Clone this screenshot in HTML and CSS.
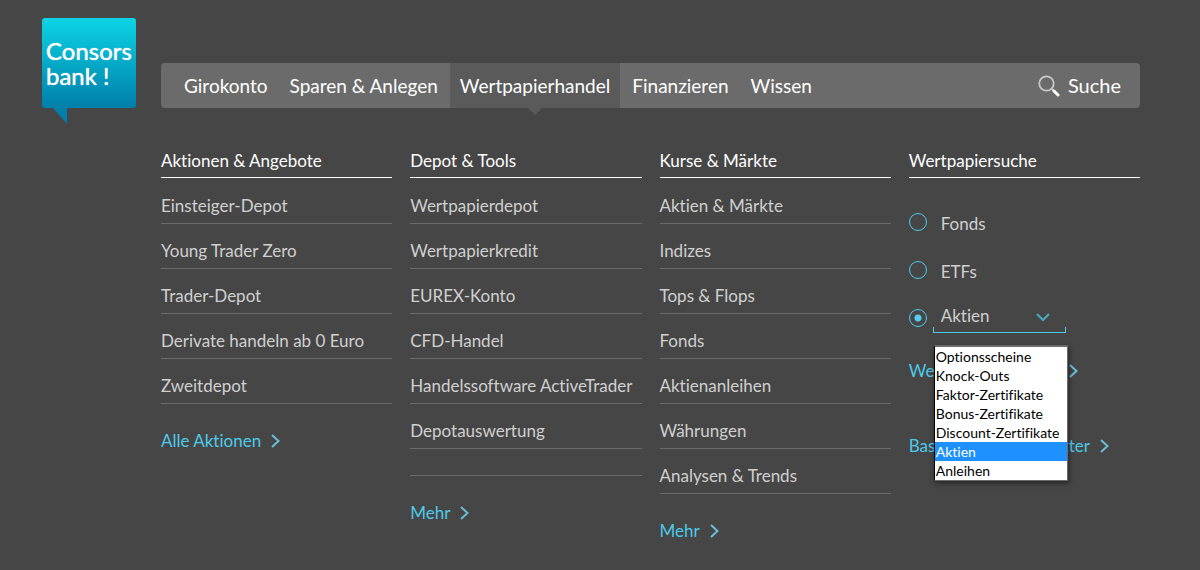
FILE: index.html
```html
<!DOCTYPE html>
<html lang="de">
<head>
<meta charset="utf-8">
<title>Consorsbank – Wertpapierhandel</title>
<link rel="stylesheet" href="styles.css">
</head>
<body>
<header class="header">
  <a class="logo" href="#" aria-label="Consorsbank Startseite">
    <span class="logo-text">Consors<br>bank !</span>
    <svg class="logo-tail" viewBox="0 0 16 16" aria-hidden="true"><path d="M0 0H14V16Z"/></svg>
  </a>
  <nav class="nav">
    <a class="nav-link" href="#">Girokonto</a>
    <a class="nav-link" href="#">Sparen &amp; Anlegen</a>
    <a class="nav-link active" href="#">Wertpapierhandel</a>
    <a class="nav-link" href="#">Finanzieren</a>
    <a class="nav-link" href="#">Wissen</a>
    <a class="nav-search" href="#">
      <svg class="search-icon" viewBox="0 0 22 22" aria-hidden="true"><circle cx="8.500" cy="8.500" r="7.200"/><path d="M14 14L16 16"/><path class="handle" d="M16 16L20 20"/></svg>
      Suche
    </a>
  </nav>
</header>
<main class="menu">
  <section class="column">
    <h2 class="title">Aktionen &amp; Angebote</h2>
    <ul class="links">
      <li><a href="#">Einsteiger-Depot</a></li>
      <li><a href="#">Young Trader Zero</a></li>
      <li><a href="#">Trader-Depot</a></li>
      <li><a href="#">Derivate handeln ab 0 Euro</a></li>
      <li><a href="#">Zweitdepot</a></li>
    </ul>
    <a class="more" href="#">Alle Aktionen<svg viewBox="0 0 9 14" aria-hidden="true"><path d="M1 1L7.500 7L1 13"/></svg></a>
  </section>
  <section class="column">
    <h2 class="title">Depot &amp; Tools</h2>
    <ul class="links">
      <li><a href="#">Wertpapierdepot</a></li>
      <li><a href="#">Wertpapierkredit</a></li>
      <li><a href="#">EUREX-Konto</a></li>
      <li><a href="#">CFD-Handel</a></li>
      <li><a href="#">Handelssoftware ActiveTrader</a></li>
      <li><a href="#">Depotauswertung</a></li>
      <li class="empty"></li>
    </ul>
    <a class="more" href="#">Mehr<svg viewBox="0 0 9 14" aria-hidden="true"><path d="M1 1L7.500 7L1 13"/></svg></a>
  </section>
  <section class="column">
    <h2 class="title">Kurse &amp; Märkte</h2>
    <ul class="links">
      <li><a href="#">Aktien &amp; Märkte</a></li>
      <li><a href="#">Indizes</a></li>
      <li><a href="#">Tops &amp; Flops</a></li>
      <li><a href="#">Fonds</a></li>
      <li><a href="#">Aktienanleihen</a></li>
      <li><a href="#">Währungen</a></li>
      <li><a href="#">Analysen &amp; Trends</a></li>
    </ul>
    <a class="more" href="#">Mehr<svg viewBox="0 0 9 14" aria-hidden="true"><path d="M1 1L7.500 7L1 13"/></svg></a>
  </section>
  <section class="column">
    <h2 class="title">Wertpapiersuche</h2>
    <form class="finder">
      <div class="choice"><input type="radio" name="kind" id="fonds"><label for="fonds">Fonds</label></div>
      <div class="choice"><input type="radio" name="kind" id="etfs"><label for="etfs">ETFs</label></div>
      <div class="choice">
        <input type="radio" name="kind" id="other" aria-label="Weitere Wertpapiere" checked>
        <div class="dropdown">
          <select class="select" aria-label="Wertpapierart">
            <option>Optionsscheine</option>
            <option>Knock-Outs</option>
            <option>Faktor-Zertifikate</option>
            <option>Bonus-Zertifikate</option>
            <option>Discount-Zertifikate</option>
            <option selected>Aktien</option>
            <option>Anleihen</option>
          </select>
          <svg class="arrow" viewBox="0 0 14 9" aria-hidden="true"><path d="M1 1L7 7L13 1"/></svg>
          <ul class="options" role="listbox" aria-label="Wertpapierart">
            <li role="option">Optionsscheine</li>
            <li role="option">Knock-Outs</li>
            <li role="option">Faktor-Zertifikate</li>
            <li role="option">Bonus-Zertifikate</li>
            <li role="option">Discount-Zertifikate</li>
            <li role="option" aria-selected="true">Aktien</li>
            <li role="option">Anleihen</li>
          </ul>
        </div>
      </div>
    </form>
    <div class="finder-links">
      <a class="more" href="#">Wertpapiere suchen<svg viewBox="0 0 9 14" aria-hidden="true"><path d="M1 1L7.500 7L1 13"/></svg></a>
      <a class="more" href="#">Basisinformationsblätter<svg viewBox="0 0 9 14" aria-hidden="true"><path d="M1 1L7.500 7L1 13"/></svg></a>
    </div>
  </section>
</main>
</body>
</html>
```

FILE: styles.css
```css
* { box-sizing: border-box; }

body {
  margin: 0;
  padding: 18px 60px 24px 42px;
  background: #464646;
  color: #d0d0d0;
  font: 17px/20px Lato, "Open Sans", sans-serif;
  font-variant-ligatures: none;
}

a { color: inherit; text-decoration: none; }
ul { list-style: none; margin: 0; padding: 0; }

.header { display: flex; gap: 25px; align-items: flex-end; }

.logo {
  position: relative;
  flex: none;
  display: flex;
  align-items: center;
  width: 94px;
  height: 90px;
  padding-left: 4px;
  border-radius: 3px;
  background: linear-gradient(#0cd4e4, #007faa);
  color: #fff;
}
.logo-text { font: 24px/25px Lato, sans-serif; text-shadow: 0 0 1px #fff; white-space: nowrap; }
.logo-tail { position: absolute; left: 11px; top: 100%; width: 16px; height: 16px; fill: #007faa; }

.nav {
  flex: 1;
  display: flex;
  gap: 2px;
  height: 45px;
  padding: 0 19px 0 13px;
  border-radius: 4px;
  background: #6b6b6b;
  color: #fff;
  font-size: 19px;
  line-height: 45px;
}
.nav-link { padding: 0 10px; }
.active { position: relative; background: #5a5a5a; }
.active::after {
  content: "";
  position: absolute;
  top: 100%;
  left: 50%;
  margin-left: -7px;
  border: 7px solid transparent;
  border-top-color: #5a5a5a;
  border-bottom: 0;
}
.nav-search { display: flex; align-items: center; gap: 8px; margin-left: auto; font-size: 20px; }
.search-icon { width: 22px; height: 22px; fill: none; stroke: #c8c8c8; stroke-width: 1.800; }
.search-icon .handle { stroke: #fff; stroke-width: 3; stroke-linecap: round; }

.menu {
  display: grid;
  grid-template-columns: repeat(4, 1fr);
  gap: 18px;
  margin: 43px 0 0 119px;
}
.title {
  margin: 0;
  padding-bottom: 6px;
  border-bottom: 1px solid #fff;
  color: #fff;
  font-size: 17px;
  font-weight: 400;
  line-height: 20px;
}
.links { padding-top: 1px; }
.links li { height: 45px; padding-top: 17px; border-bottom: 1px solid #6b6b6b; white-space: nowrap; }
.links .empty { height: 27px; }

.more { display: flex; align-items: center; gap: 10px; width: fit-content; color: #4dcbea; white-space: nowrap; }
.more svg { width: 9px; height: 14px; fill: none; stroke: #6cbdd8; stroke-width: 2; }
.links + .more { margin-top: 27px; }

.finder { display: grid; gap: 16px; padding-top: 28px; }
.choice { display: flex; align-items: center; gap: 14px; height: 32px; }
.choice input {
  appearance: none;
  flex: none;
  width: 18px;
  height: 18px;
  margin: 0;
  border: 1px solid #4dcbea;
  border-radius: 50%;
}
.choice input:checked { background: radial-gradient(circle, #4fd0f0 3px, transparent 4px); }
.choice label { padding-top: 3px; }
.dropdown { position: relative; width: 133px; margin-left: -8px; }
.select {
  display: block;
  appearance: none;
  width: 100%;
  height: 30px;
  padding: 0 8px 5px;
  border: 0;
  background: linear-gradient(#4dcbea, #4dcbea) left bottom / 1px 6px no-repeat,
    linear-gradient(#4dcbea, #4dcbea) right bottom / 1px 6px no-repeat,
    linear-gradient(#4dcbea, #4dcbea) left bottom / 100% 1px no-repeat;
  color: inherit;
  font: inherit;
}
.arrow { position: absolute; right: 16px; top: 10px; width: 14px; height: 9px; fill: none; stroke: #49a9c2; stroke-width: 2; }
.options {
  position: absolute;
  z-index: 1;
  top: 42px;
  left: 1px;
  width: 134px;
  border: 1px solid #6b6b6b;
  border-top-width: 2px;
  border-left-color: #000;
  background: #fff;
  box-shadow: 1px 2px 5px rgba(0, 0, 0, .5);
  color: #000;
  font-size: 14px;
  line-height: 19px;
}
.options li { padding-left: 1px; white-space: nowrap; }
.options [aria-selected] { background: #1e90ff; color: #fff; }
.finder-links { display: grid; gap: 55px; padding-top: 27px; }
```
